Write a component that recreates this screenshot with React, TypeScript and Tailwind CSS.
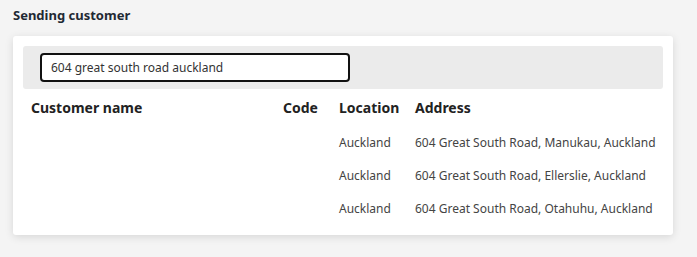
import React from "react";

const rows = [
  { name: "", code: "", location: "Auckland", address: "604 Great South Road, Manukau, Auckland" },
  { name: "", code: "", location: "Auckland", address: "604 Great South Road, Ellerslie, Auckland" },
  { name: "", code: "", location: "Auckland", address: "604 Great South Road, Otahuhu, Auckland" },
];

export default function App() {
  return (
    <div
      className="w-[697px] h-[257px] bg-[#f4f4f4] px-[13px] pt-[6px]"
      style={{ fontFamily: '"Noto Sans", sans-serif' }}
    >
      <h2 className="text-[13px] font-bold leading-[18px] text-[#1f2933]">Sending customer</h2>
      <div className="mt-[12px] w-[660px] rounded-[3px] bg-white p-[10px] pb-[10px] shadow-[0_2px_8px_rgba(0,0,0,0.12)]">
        <div className="flex h-[43px] items-center rounded-[3px] bg-[#ebebeb] px-[17px]">
          <div className="flex h-[29px] w-[310px] items-center rounded-[4px] border-2 border-[#111] bg-white px-[9px] text-[12px] text-[#333]">
            604 great south road auckland
          </div>
        </div>
        <div className="grid grid-cols-[252px_56px_76px_256px]">
          <div className="px-2 pt-[9px] pb-[8px] text-[14px] font-bold leading-[20px] text-[#222]">Customer name</div>
          <div className="px-2 pt-[9px] pb-[8px] text-[14px] font-bold leading-[20px] text-[#222]">Code</div>
          <div className="px-2 pt-[9px] pb-[8px] text-[14px] font-bold leading-[20px] text-[#222]">Location</div>
          <div className="px-2 pt-[9px] pb-[8px] text-[14px] font-bold leading-[20px] text-[#222]">Address</div>
          {rows.map((r, i) => (
            <React.Fragment key={i}>
              <div className="h-[33px] px-2 text-[12px] leading-[33px] text-[#444]">{r.name}</div>
              <div className="h-[33px] px-2 text-[12px] leading-[33px] text-[#444]">{r.code}</div>
              <div className="h-[33px] px-2 text-[12px] leading-[33px] text-[#444]">{r.location}</div>
              <div className="h-[33px] px-2 text-[12px] leading-[33px] text-[#444] whitespace-nowrap">{r.address}</div>
            </React.Fragment>
          ))}
        </div>
      </div>
    </div>
  );
}
